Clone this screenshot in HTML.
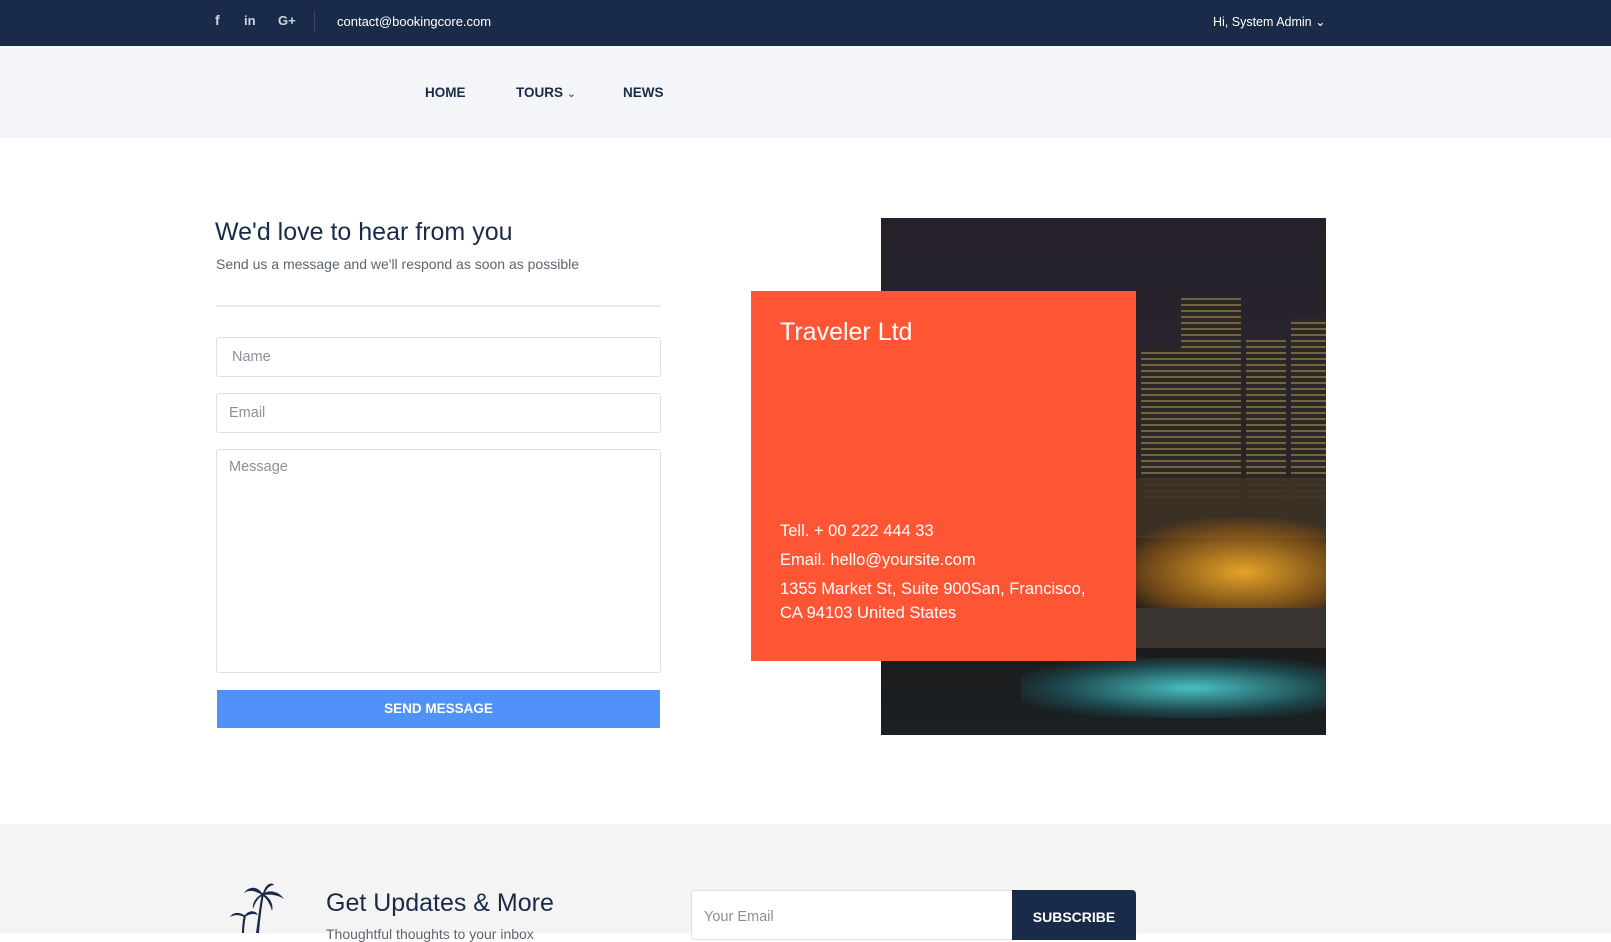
<!DOCTYPE html>
<html><head><meta charset="utf-8"><style>
*{margin:0;padding:0;box-sizing:border-box}
body{width:1611px;height:933px;overflow:hidden;background:#fff;font-family:"Liberation Sans",sans-serif;position:relative}
.abs{position:absolute;white-space:nowrap}
.top{position:absolute;left:0;top:0;width:1611px;height:46px;background:#1a2b49}
.nav{position:absolute;left:0;top:46px;width:1611px;height:92px;background:#f4f5f8}
.navi{font-size:13.5px;font-weight:bold;color:#1a2b49}
.inp{position:absolute;left:216px;width:445px;border:1px solid #dde1e6;border-radius:3px;background:#fff}
.inp span{position:absolute;left:15px;font-size:14.5px;color:#8a8f99}
.info{font-size:16.5px;color:#fff}
.b{position:absolute;background:repeating-linear-gradient(0deg,rgba(255,210,120,.35) 0 2px,transparent 2px 6px),#2b2724}
</style></head><body>
<div class="top"></div>
<div class="abs" style="left:215px;top:12px;color:#cfd5df;font-size:14px;font-weight:bold">f</div>
<div class="abs" style="left:244px;top:13px;color:#cfd5df;font-size:13px;font-weight:bold">in</div>
<div class="abs" style="left:278px;top:13px;color:#cfd5df;font-size:13px;font-weight:bold">G+</div>
<div class="abs" style="left:314px;top:11px;width:1px;height:22px;background:#3a4a66"></div>
<div class="abs" style="left:337px;top:14px;color:#fff;font-size:13px">contact@bookingcore.com</div>
<div class="abs" style="left:1213px;top:14px;color:#fff;font-size:12.5px">Hi, System Admin ⌄</div>
<div class="nav"></div>
<div class="abs navi" style="left:425px;top:85px">HOME</div>
<div class="abs navi" style="left:516px;top:85px">TOURS <span style="font-weight:normal;font-size:11px">⌄</span></div>
<div class="abs navi" style="left:623px;top:85px">NEWS</div>

<div class="abs" style="left:215px;top:218px;font-size:25px;color:#1a2b49">We'd love to hear from you</div>
<div class="abs" style="left:216px;top:256px;font-size:14px;color:#5e6470">Send us a message and we'll respond as soon as possible</div>
<div class="abs" style="left:216px;top:305px;width:445px;height:2px;background:#e8eaee"></div>
<div class="inp" style="top:337px;height:40px"><span style="top:11px">Name</span></div>
<div class="inp" style="top:393px;height:40px"><span style="top:11px;left:12px">Email</span></div>
<div class="inp" style="top:449px;height:224px"><span style="top:9px;left:12px">Message</span></div>
<div class="abs" style="left:217px;top:690px;width:443px;height:38px;background:#5191fa;color:#fff;font-size:13.5px;font-weight:bold;text-align:center;line-height:38px">SEND MESSAGE</div>

<div class="abs" style="left:881px;top:218px;width:445px;height:517px;overflow:hidden;background:linear-gradient(#25212a 0%,#28232c 25%,#2a2320 55%,#1d1b1a 80%,#1a2024 100%)">
<div class="b" style="left:300px;top:80px;width:60px;height:200px"></div>
<div class="b" style="left:260px;top:130px;width:45px;height:150px"></div>
<div class="b" style="left:365px;top:120px;width:40px;height:160px"></div>
<div class="b" style="left:410px;top:100px;width:40px;height:180px"></div>
<div class="abs" style="left:250px;top:260px;width:200px;height:60px;background:rgba(60,50,35,.9)"></div>
<div class="abs" style="left:230px;top:300px;width:220px;height:90px;background:radial-gradient(ellipse at 60% 60%,rgba(240,170,40,.95),rgba(150,90,20,.6) 55%,transparent 75%)"></div>
<div class="abs" style="left:230px;top:390px;width:220px;height:40px;background:#3a3530"></div>
<div class="abs" style="left:140px;top:440px;width:310px;height:60px;background:radial-gradient(ellipse at 55% 50%,rgba(80,220,220,.85),rgba(30,110,120,.5) 55%,transparent 80%)"></div>
</div>
<div class="abs" style="left:751px;top:291px;width:385px;height:370px;background:#fe5534"></div>
<div class="abs" style="left:780px;top:318px;font-size:25px;color:#fff">Traveler Ltd</div>
<div class="abs info" style="left:780px;top:522px">Tell. + 00 222 444 33</div>
<div class="abs info" style="left:780px;top:551px">Email. hello@yoursite.com</div>
<div class="abs info" style="left:780px;top:580px">1355 Market St, Suite 900San, Francisco,</div>
<div class="abs info" style="left:780px;top:604px">CA 94103 United States</div>

<div class="abs" style="left:0;top:824px;width:1611px;height:109px;background:#f4f4f4"></div>
<svg class="abs" style="left:228px;top:883px" width="62" height="50" viewBox="0 0 62 50">
<g fill="#1a2b49"><path d="M28 50 C30 35 32 20 34 10 L36 10 C34 22 32 36 31 50Z"/>
<path d="M34 10 C28 2 20 4 16 10 C22 6 28 8 34 12Z"/><path d="M35 10 C38 0 44 -1 46 2 C42 2 38 6 36 12Z"/>
<path d="M36 10 C44 6 52 10 56 16 C50 12 42 11 36 12Z"/><path d="M35 11 C42 14 46 22 44 28 C42 20 38 15 35 13Z"/>
<path d="M34 11 C28 14 24 20 25 26 C27 20 30 15 34 13Z"/>
<path d="M14 50 C14 42 15 36 16 32 L18 32 C17 38 16 44 16 50Z"/><path d="M16 32 C10 28 4 30 2 34 C7 31 12 32 16 34Z"/><path d="M17 32 C22 26 28 28 30 32 C25 30 21 31 17 34Z"/></g></svg>
<div class="abs" style="left:326px;top:889px;font-size:25px;color:#1a2b49">Get Updates &amp; More</div>
<div class="abs" style="left:326px;top:926px;font-size:14px;color:#5e6470">Thoughtful thoughts to your inbox</div>
<div class="abs" style="left:691px;top:890px;width:322px;height:50px;background:#fff;border:1px solid #dde1e6;border-radius:3px 0 0 3px"></div>
<div class="abs" style="left:704px;top:909px;font-size:14.5px;color:#8a8f99">Your Email</div>
<div class="abs" style="left:1012px;top:890px;width:124px;height:50px;background:#1a2b49;border-radius:0 4px 0 0;color:#fff;font-size:14px;font-weight:bold;text-align:center;padding-top:19px">SUBSCRIBE</div>
</body></html>
